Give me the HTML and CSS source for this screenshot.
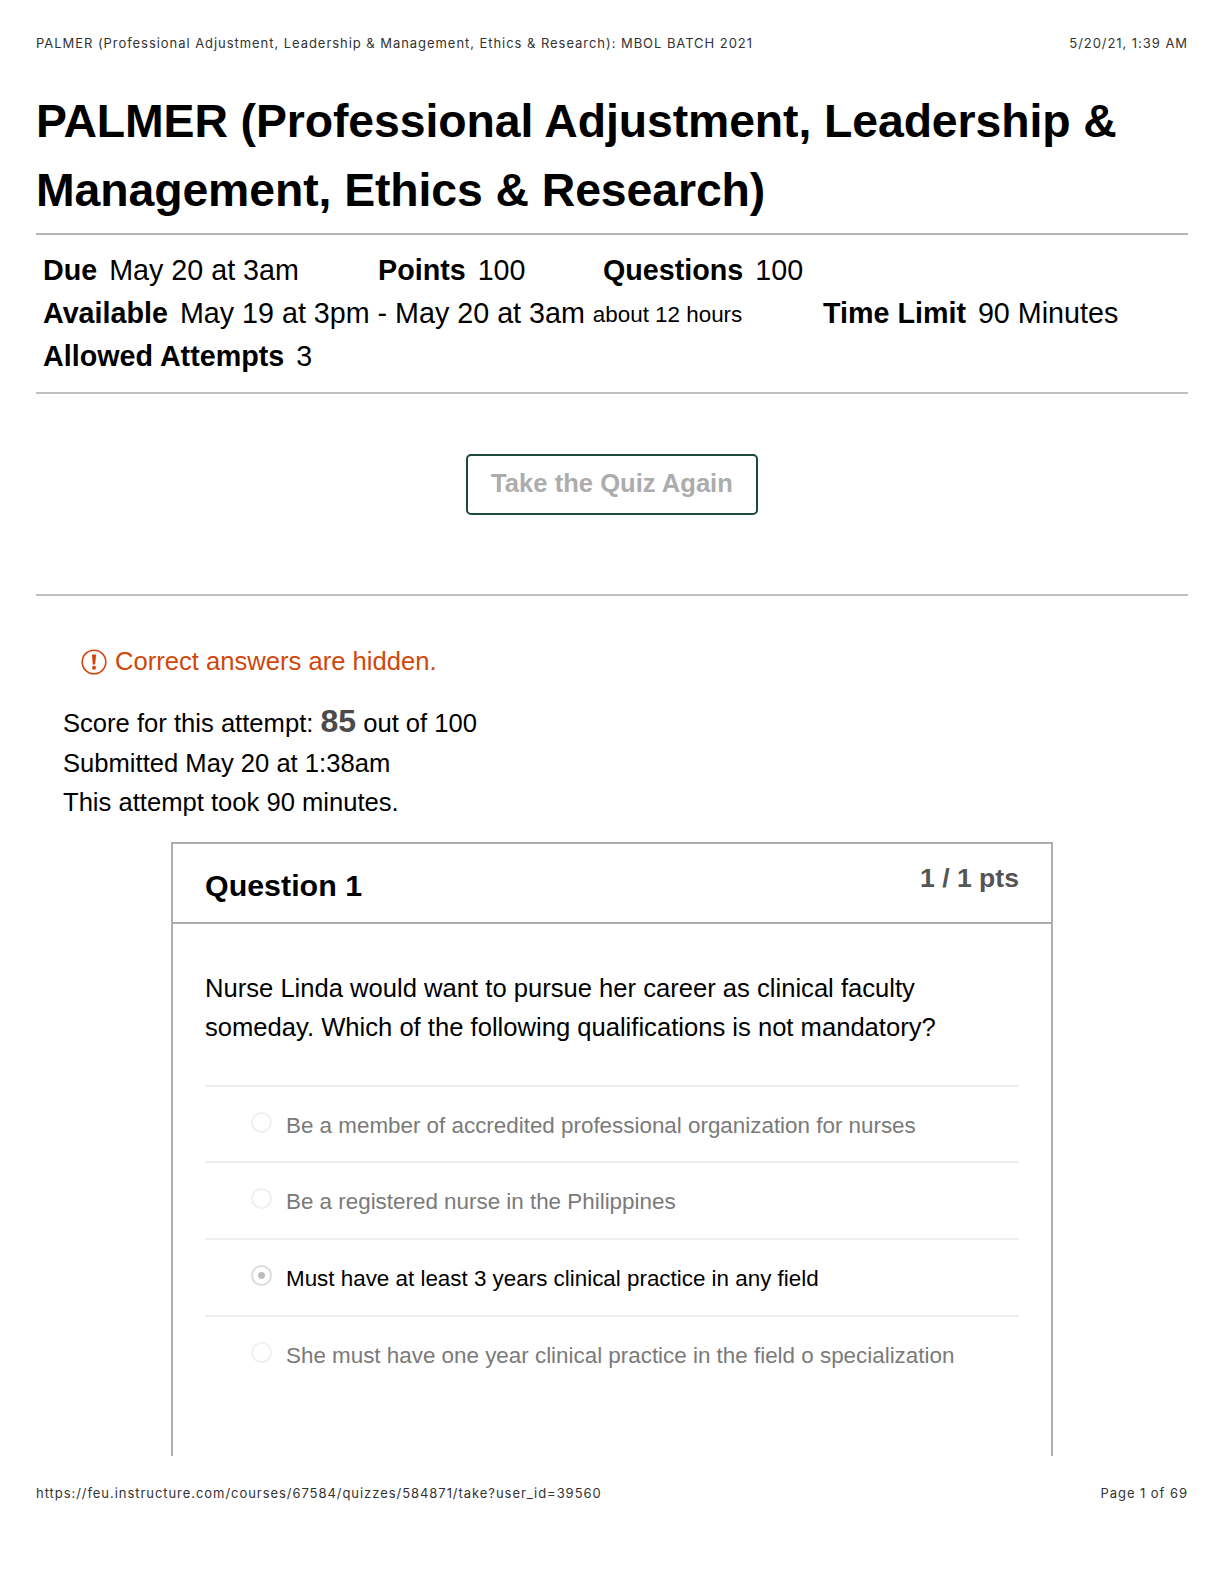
FILE: index.html
```html
<!DOCTYPE html>
<html lang="en">
<head>
<meta charset="utf-8">
<title>PALMER</title>
<link rel="stylesheet" href="styles.css">
</head>
<body>
<div class="page">
  <header class="print-bar top">
    <span>PALMER (Professional Adjustment, Leadership &amp; Management, Ethics &amp; Research): MBOL BATCH 2021</span>
    <span>5/20/21, 1:39 AM</span>
  </header>
  <main class="sheet">
    <h1>PALMER (Professional Adjustment, Leadership &amp; Management, Ethics &amp; Research)</h1>
    <section class="meta">
      <div class="meta-row">
        <span class="item due"><b>Due</b> May 20 at 3am</span>
        <span class="item points"><b>Points</b> 100</span>
        <span class="item"><b>Questions</b> 100</span>
      </div>
      <div class="meta-row">
        <span class="item avail"><b>Available</b> May 19 at 3pm - May 20 at 3am <small>about 12 hours</small></span>
        <span class="item"><b>Time Limit</b> 90 Minutes</span>
      </div>
      <div class="meta-row">
        <span class="item"><b>Allowed Attempts</b> 3</span>
      </div>
    </section>
    <div class="action"><a class="btn">Take the Quiz Again</a></div>
    <div class="alert">
      <svg class="alert-icon" viewBox="0 0 26 26" aria-hidden="true"><circle cx="13" cy="13" r="11.8" fill="none" stroke="#d0470a" stroke-width="1.6"/><path d="M10.9 5.6h4.2l-.9 10h-2.4z" fill="#d0470a"/><circle cx="13" cy="18.8" r="2" fill="#d0470a"/></svg>
      <span>Correct answers are hidden.</span>
    </div>
    <section class="score">
      <div>Score for this attempt: <strong>85</strong> out of 100</div>
      <div>Submitted May 20 at 1:38am</div>
      <div>This attempt took 90 minutes.</div>
    </section>
    <article class="question">
      <div class="q-head">
        <h2>Question 1</h2>
        <span class="pts">1 / 1 pts</span>
      </div>
      <div class="q-body">
        <p>Nurse Linda would want to pursue her career as clinical faculty someday. Which of the following qualifications is not mandatory?</p>
        <ul class="answers">
          <li><i class="radio"></i>Be a member of accredited professional organization for nurses</li>
          <li><i class="radio"></i>Be a registered nurse in the Philippines</li>
          <li class="picked"><i class="radio on"></i>Must have at least 3 years clinical practice in any field</li>
          <li><i class="radio"></i>She must have one year clinical practice in the field o specialization</li>
        </ul>
      </div>
    </article>
  </main>
  <footer class="print-bar bottom">
    <span>https://feu.instructure.com/courses/67584/quizzes/584871/take?user_id=39560</span>
    <span>Page 1 of 69</span>
  </footer>
</div>
</body>
</html>
```
FILE: styles.css
```css
* { box-sizing: border-box; }
html, body { margin: 0; padding: 0; background: #fff; }
body { font-family: "Liberation Sans", Arial, sans-serif; color: #000; }
.page { width: 1224px; height: 1584px; padding: 0 36px; overflow: hidden; display: flex; flex-direction: column; }
.print-bar { display: flex; justify-content: space-between; font-family: Inter, "Liberation Sans", sans-serif; font-size: 13px; letter-spacing: .95px; line-height: 18px; color: #333; }
.print-bar.top { padding-top: 34px; height: 52px; }
.print-bar.bottom { padding-top: 28px; }
.sheet { height: 1404px; overflow: hidden; flex: none; }
h1 { margin: 35px 0 0; font-size: 46.4px; line-height: 69px; font-weight: 700; letter-spacing: -.1px; padding-bottom: 8px; border-bottom: 2px solid #b4b4b4; }
.meta { height: 159px; padding: 14px 7px 0; border-bottom: 2px solid #c0c0c0; font-size: 28.7px; line-height: 43px; }
.meta-row { display: flex; height: 43px; }
.item b { margin-right: 4px; }
.due { width: 335px; }
.points { width: 225px; }
.avail { width: 780px; }
.item small { font-size: 22.4px; line-height: 1; vertical-align: 1px; }
.action { height: 202px; padding-top: 60px; border-bottom: 2px solid #c0c0c0; text-align: center; }
.btn { display: inline-block; width: 292px; height: 61px; line-height: 55px; border: 2px solid #1c4a36; border-radius: 5px; font-size: 25.6px; font-weight: 700; color: #acacac; }
.alert { display: flex; align-items: center; gap: 8px; margin: 48px 0 0 45px; color: #d0470a; font-size: 25.6px; line-height: 35px; }
.alert-icon { width: 26px; height: 26px; }
.score { margin: 25px 0 0 27px; font-size: 25.6px; line-height: 39.5px; }
.score strong { font-size: 32px; color: #4a4a4a; line-height: 30px; }
.question { width: 882px; margin: 19px 0 0 135px; height: 800px; border: 2px solid #aeaeae; }
.q-head { height: 80px; padding: 0 32px; display: flex; justify-content: space-between; border-bottom: 2px solid #aeaeae; }
h2 { margin: 19px 0 0; font-size: 30.4px; line-height: 44px; font-weight: 700; }
.pts { margin-top: 14px; font-size: 26.6px; line-height: 40px; font-weight: 700; color: #555; }
.q-body { padding: 45px 32px 0; }
.q-body p { margin: 0 0 38px; font-size: 25.6px; line-height: 39px; }
.answers { list-style: none; margin: 0; padding: 0; }
.answers li { height: 76.8px; padding: 21px 0 0 46px; display: flex; align-items: flex-start; border-top: 2px solid #eee; font-size: 22.4px; line-height: 36px; color: #7a7a7a; }
.answers li.picked { color: #000; }
.radio { flex: none; width: 21px; height: 21px; margin: 4px 14px 0 0; border-radius: 50%; border: 2px solid #f0f0f0; }
.radio.on { border-color: #ddd; background: radial-gradient(circle, #bbb 0 3px, #fff 4px); }
```
